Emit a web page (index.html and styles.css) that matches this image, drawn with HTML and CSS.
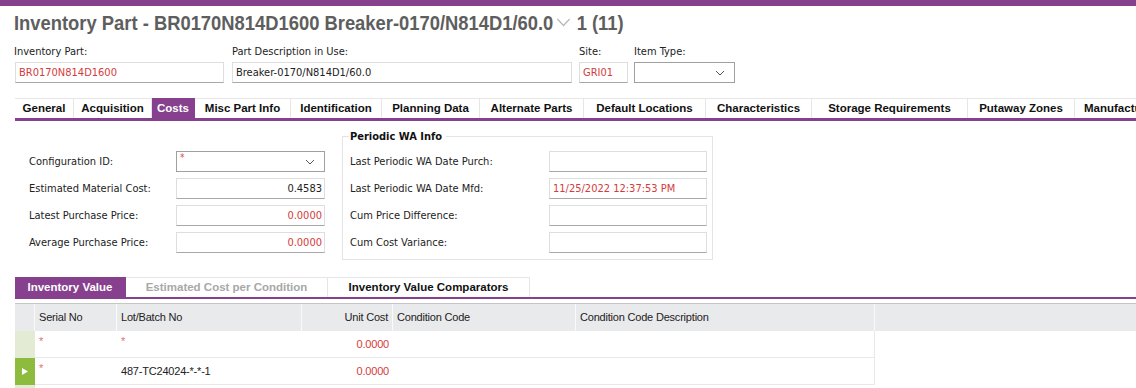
FILE: index.html
```html
<!DOCTYPE html>
<html lang="en">
<head>
  <meta charset="UTF-8" />
  <title>Inventory Part</title>
  <link rel="stylesheet" href="styles.css">
</head>
<body>
  <div class="topbar"></div>

  <h1 class="page-title">
    <span class="title-text">
      Inventory Part - BR0170N814D1600 Breaker-0170/N814D1/60.0
      <svg class="title-chevron" width="16" height="9" viewBox="0 0 16 9"><path d="M1 1 L8 7.5 L15 1" fill="none" stroke="#b5b5b5" stroke-width="1.3"/></svg>
      1 (11)
    </span>
  </h1>

  <div class="head-fields">
    <div class="field w-part">
      <label>Inventory Part:</label>
      <div class="box red">BR0170N814D1600</div>
    </div>
    <div class="field w-desc">
      <label>Part Description in Use:</label>
      <div class="box">Breaker-0170/N814D1/60.0</div>
    </div>
    <div class="field w-site">
      <label>Site:</label>
      <div class="box red">GRI01</div>
    </div>
    <div class="field w-type">
      <label>Item Type:</label>
      <div class="box select">
        <span></span>
        <svg class="caret" width="10" height="6" viewBox="0 0 10 6"><path d="M1 1 L5 5 L9 1" fill="none" stroke="#555" stroke-width="1"/></svg>
      </div>
    </div>
  </div>

  <div class="tabs main-tabs">
    <div class="tab">General</div>
    <div class="tab">Acquisition</div>
    <div class="tab active">Costs</div>
    <div class="tab">Misc Part Info</div>
    <div class="tab">Identification</div>
    <div class="tab">Planning Data</div>
    <div class="tab">Alternate Parts</div>
    <div class="tab">Default Locations</div>
    <div class="tab">Characteristics</div>
    <div class="tab">Storage Requirements</div>
    <div class="tab">Putaway Zones</div>
    <div class="tab">Manufactu</div>
  </div>

  <div class="costs">
    <div class="cost-fields">
      <label>Configuration ID:</label>
      <div class="box select">
        <span class="req">*</span>
        <svg class="caret" width="10" height="6" viewBox="0 0 10 6"><path d="M1 1 L5 5 L9 1" fill="none" stroke="#555" stroke-width="1"/></svg>
      </div>
      <label>Estimated Material Cost:</label>
      <div class="box num">0.4583</div>
      <label>Latest Purchase Price:</label>
      <div class="box num red">0.0000</div>
      <label>Average Purchase Price:</label>
      <div class="box num red">0.0000</div>
    </div>

    <fieldset class="wa-info">
      <legend>Periodic WA Info</legend>
      <label>Last Periodic WA Date Purch:</label>
      <div class="box"></div>
      <label>Last Periodic WA Date Mfd:</label>
      <div class="box red">11/25/2022 12:37:53 PM</div>
      <label>Cum Price Difference:</label>
      <div class="box"></div>
      <label>Cum Cost Variance:</label>
      <div class="box"></div>
    </fieldset>
  </div>

  <div class="tabs sub-tabs">
    <div class="tab active">Inventory Value</div>
    <div class="tab muted">Estimated Cost per Condition</div>
    <div class="tab">Inventory Value Comparators</div>
  </div>

  <div class="grid">
    <div class="grid-row grid-head">
      <div class="cell ind"></div>
      <div class="cell c-serial">Serial No</div>
      <div class="cell c-lot">Lot/Batch No</div>
      <div class="cell c-cost">Unit Cost</div>
      <div class="cell c-cond">Condition Code</div>
      <div class="cell c-desc">Condition Code Description</div>
      <div class="cell c-rest"></div>
    </div>
    <div class="grid-row">
      <div class="cell ind"></div>
      <div class="cell c-serial"><span class="req">*</span></div>
      <div class="cell c-lot"><span class="req">*</span></div>
      <div class="cell c-cost red">0.0000</div>
      <div class="cell c-cond"></div>
      <div class="cell c-desc"></div>
      <div class="cell c-rest"></div>
    </div>
    <div class="grid-row current">
      <div class="cell ind"><svg width="6" height="7" viewBox="0 0 6 7"><path d="M0 0 L6 3.5 L0 7 Z" fill="#fff"/></svg></div>
      <div class="cell c-serial"><span class="req">*</span></div>
      <div class="cell c-lot">487-TC24024-*-*-1</div>
      <div class="cell c-cost red">0.0000</div>
      <div class="cell c-cond"></div>
      <div class="cell c-desc"></div>
      <div class="cell c-rest"></div>
    </div>
    <div class="grid-row">
      <div class="cell ind"></div>
    </div>
  </div>
</body>
</html>
```

FILE: styles.css
```css
body {
  margin: 0;
  padding: 0;
  background: #fff;
  color: #222;
  font-family: 'DejaVu Sans Condensed', 'DejaVu Sans', sans-serif;
  font-size: 11px;
  overflow: hidden;
}

.topbar {
  height: 6px;
  background: #86408d;
}

.page-title {
  margin: 2px 0 0 14px;
  height: 30px;
  line-height: 30px;
  font-family: 'Liberation Sans', sans-serif;
  font-size: 21px;
  font-weight: bold;
  color: #5e5e5e;
  white-space: nowrap;
}

/* the real title face is a narrow bold one */
.title-text {
  display: inline-block;
  transform: scaleX(0.875);
  transform-origin: left center;
}

.title-chevron {
  margin: 0 1px 0 -2px;
  vertical-align: 3px;
}

/* header fields */
.head-fields {
  display: flex;
  gap: 8px;
  padding-left: 14px;
  margin-top: 6px;
}

.field label {
  display: block;
  height: 18px;
  line-height: 15px;
  color: #222;
}

.w-part { width: 210px; }
.w-desc { width: 340px; }
.w-site { width: 49px; margin-left: -1px; }
.w-type { width: 101px; margin-left: -2px; }

.box {
  box-sizing: border-box;
  height: 21px;
  line-height: 19px;
  padding: 0 3px;
  border: 1px solid #dedede;
  border-bottom-color: #a8a8a8;
  background: #fff;
  white-space: nowrap;
  overflow: hidden;
  color: #222;
}

.w-part .box { margin-left: 1px; }

.box.select {
  display: flex;
  justify-content: space-between;
  align-items: center;
  border-color: #a0a0a0;
  padding: 0 9px 0 3px;
}

.box.num {
  text-align: right;
  padding-right: 2px;
}

.red { color: #d43b3b !important; }

.req {
  color: #e04848;
  font-size: 10px;
  align-self: flex-start;
  line-height: 12px;
}

/* tabs */
.tabs {
  display: flex;
  margin-left: 15px;
  font-family: 'Liberation Sans', sans-serif;
  font-weight: bold;
  font-size: 11.5px;
  border-bottom: 3px solid #86408d;
}

.tab {
  box-sizing: border-box;
  height: 20px;
  line-height: 19px;
  text-align: center;
  white-space: nowrap;
  color: #111;
  border-top: 1px solid #e6e6e6;
  border-right: 1px solid #e6e6e6;
  flex: none;
}

.tab.active {
  background: #86408d;
  color: #fff;
  border-color: #86408d;
}

.tab.muted {
  color: #a8a8a8;
}

.main-tabs {
  margin-top: 15px;
  overflow: hidden;
}

.main-tabs .tab:nth-child(1) { width: 59px; }
.main-tabs .tab:nth-child(2) { width: 78px; }
.main-tabs .tab:nth-child(3) { width: 43px; }
.main-tabs .tab:nth-child(4) { width: 96px; }
.main-tabs .tab:nth-child(5) { width: 91px; }
.main-tabs .tab:nth-child(6) { width: 98px; }
.main-tabs .tab:nth-child(7) { width: 104px; }
.main-tabs .tab:nth-child(8) { width: 122px; }
.main-tabs .tab:nth-child(9) { width: 106px; }
.main-tabs .tab:nth-child(10) { width: 156px; }
.main-tabs .tab:nth-child(11) { width: 107px; }
.main-tabs .tab:nth-child(12) { width: 70px; text-align: left; padding-left: 9px; border-right: none; overflow: hidden; }

.sub-tabs {
  margin-top: 17px;
  border-bottom-width: 2px;
}

.sub-tabs .tab:nth-child(1) { width: 111px; }
.sub-tabs .tab:nth-child(2) { width: 202px; }
.sub-tabs .tab:nth-child(3) { width: 202px; }

/* costs panel */
.costs {
  display: flex;
  align-items: flex-start;
  padding-left: 29px;
  margin-top: 9px;
}

.cost-fields {
  display: grid;
  grid-template-columns: 147px 149px;
  row-gap: 6px;
  margin-top: 21px;
  align-items: center;
}

.cost-fields label,
.wa-info label {
  color: #222;
}

.wa-info {
  display: grid;
  grid-template-columns: 199px 158px;
  row-gap: 6px;
  align-items: center;
  margin: 0 0 0 17px;
  padding: 8px 5px 6px 7px;
  border: 1px solid #e4e4e4;
  width: 371px;
  box-sizing: border-box;
}

.wa-info legend {
  font-weight: bold;
  color: #111;
  padding: 0 4px 0 1px;
  margin-left: -1px;
}

/* grid */
.grid {
  margin: 4px 0 0 15px;
  font-family: 'Liberation Sans', sans-serif;
  font-size: 11px;
  letter-spacing: -0.2px;
  color: #222;
}

.grid-row {
  display: flex;
  height: 27px;
  box-sizing: border-box;
}

.grid-head {
  background: #e9eaeb;
  border-top: 1px solid #c6c6c6;
  height: 28px;
}

.cell {
  box-sizing: border-box;
  flex: none;
  line-height: 26px;
  padding: 0 4px;
  white-space: nowrap;
  border-bottom: 1px solid #e8e8e8;
}

.grid-head .cell {
  border-bottom: none;
  border-right: 1px solid #fafafa;
}

.ind {
  width: 20px;
  background: #e3ebd5;
  border-bottom-color: #e3ebd5;
  display: flex;
  align-items: center;
  justify-content: center;
}

.grid-head .ind { background: #e9eaeb; }

.current .ind {
  background: #8cbb3e;
  border-bottom-color: #8cbb3e;
}

.c-serial { width: 82px; }
.c-lot { width: 185px; }
.c-cost { width: 91px; text-align: right; }
.c-cond { width: 183px; }
.c-desc { width: 299px; border-right: 1px solid #e8e8e8; }
.c-rest { flex: 1; border-bottom: none; }

.grid-head .c-rest { border-right: none; }

.grid .req {
  color: #e07070;
  font-size: 11px;
  vertical-align: 3px;
}
```
